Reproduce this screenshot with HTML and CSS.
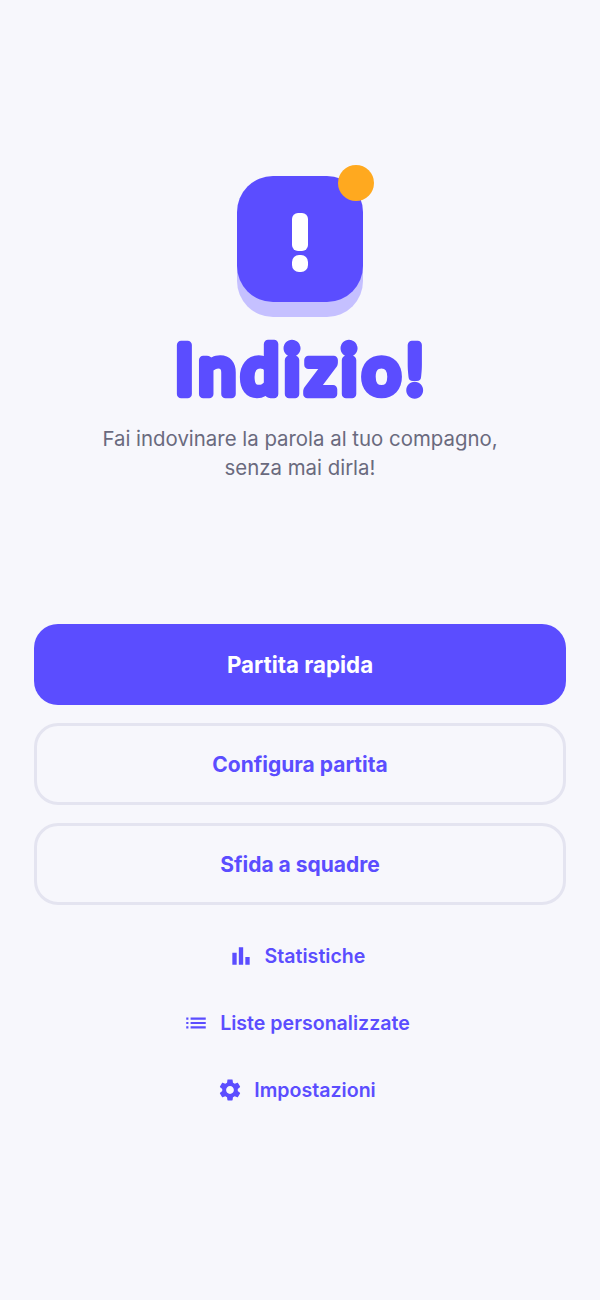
FILE: index.html
```html
<!DOCTYPE html>
<html lang="it">
<head>
<meta charset="utf-8">
<title>Indizio!</title>
<link rel="stylesheet" href="styles.css">
</head>
<body>
<main class="page">
  <section class="hero">
    <div class="logo">
      <span class="logo-bar"></span>
      <span class="logo-point"></span>
      <span class="logo-dot"></span>
    </div>
    <h1 class="title"><svg class="title-svg" viewBox="0 0 340 80"><text class="title-text" x="172" y="64" text-anchor="middle">Indizio!</text></svg></h1>
    <p class="subtitle">Fai indovinare la parola al tuo compagno,<br>senza mai dirla!</p>
  </section>
  <section class="actions">
    <button class="btn btn-primary">Partita rapida</button>
    <button class="btn btn-outline">Configura partita</button>
    <button class="btn btn-outline">Sfida a squadre</button>
  </section>
  <nav class="links">
    <a class="link"><svg class="icon" viewBox="0 0 24 24"><path d="M4 9h4v11H4zm12 4h4v7h-4zm-6-9h4v16h-4z"/></svg>Statistiche</a>
    <a class="link"><svg class="icon" viewBox="0 0 24 24"><path d="M3 13h2v-2H3v2zm0 4h2v-2H3v2zm0-8h2V7H3v2zm4 4h14v-2H7v2zm0 4h14v-2H7v2zM7 7v2h14V7H7z"/></svg>Liste personalizzate</a>
    <a class="link"><svg class="icon" viewBox="0 0 24 24"><path d="M19.14 12.94c.04-.3.06-.61.06-.94 0-.32-.02-.64-.07-.94l2.03-1.58c.18-.14.23-.41.12-.61l-1.92-3.32c-.12-.22-.37-.29-.59-.22l-2.39.96c-.5-.38-1.03-.7-1.62-.94l-.36-2.54c-.04-.24-.24-.41-.48-.41h-3.84c-.24 0-.43.17-.47.41l-.36 2.54c-.59.24-1.13.57-1.62.94l-2.39-.96c-.22-.08-.47 0-.59.22L2.74 8.87c-.12.21-.08.47.12.61l2.03 1.58c-.05.3-.09.63-.09.94s.02.64.07.94l-2.03 1.58c-.18.14-.23.41-.12.61l1.92 3.32c.12.22.37.29.59.22l2.39-.96c.5.38 1.03.7 1.62.94l.36 2.54c.05.24.24.41.48.41h3.84c.24 0 .44-.17.47-.41l.36-2.54c.59-.24 1.13-.56 1.62-.94l2.39.96c.22.08.47 0 .59-.22l1.92-3.32c.12-.22.07-.47-.12-.61l-2.01-1.58zM12 15.6c-1.98 0-3.6-1.62-3.6-3.6s1.62-3.6 3.6-3.6 3.6 1.62 3.6 3.6-1.62 3.6-3.6 3.6z"/></svg>Impostazioni</a>
  </nav>
</main>
</body>
</html>
```
FILE: styles.css
```css
* { box-sizing: border-box; }
html, body { margin: 0; height: 100%; }
body {
  background: #f7f7fc;
  font-family: "Inter", "Noto Sans", sans-serif;
  color: #5b4dff;
}
.page {
  display: flex;
  flex-direction: column;
  align-items: stretch;
  min-height: 1300px;
  padding: 176px 34px 0;
}
.hero {
  display: flex;
  flex-direction: column;
  align-items: center;
}
.logo {
  position: relative;
  display: flex;
  flex-direction: column;
  align-items: center;
  justify-content: center;
  gap: 4px;
  width: 126px;
  height: 126px;
  padding-top: 7px;
  border-radius: 36px;
  background: #5b4dff;
  box-shadow: 0 15px 0 #c5c0ff;
}
.logo-bar {
  width: 16px;
  height: 38px;
  border-radius: 6px;
  background: #fff;
}
.logo-point {
  width: 16px;
  height: 17px;
  border-radius: 7px;
  background: #fff;
}
.logo-dot {
  position: absolute;
  top: -11px;
  right: -11px;
  width: 36px;
  height: 36px;
  border-radius: 50%;
  background: #ffa91f;
}
.title {
  margin: 28px 0 0;
}
.title-svg {
  display: block;
  width: 340px;
  height: 80px;
  overflow: visible;
}
.title-text {
  font-family: "Lato", sans-serif;
  font-size: 67px;
  font-weight: 400;
  letter-spacing: 5.3px;
  fill: #5b4dff;
  stroke: #5b4dff;
  stroke-width: 8.5px;
  stroke-linejoin: round;
}
.subtitle {
  margin: 14px 0 0;
  text-align: center;
  font-size: 20.4px;
  line-height: 29px;
  color: #6a6a7e;
}
.actions {
  display: flex;
  flex-direction: column;
  gap: 18px;
  margin-top: 142px;
}
.btn {
  display: block;
  width: 100%;
  height: 82px;
  border-radius: 24px;
  font-family: inherit;
  font-size: 21px;
  font-weight: 700;
  cursor: pointer;
}
.btn-primary {
  height: 81px;
  border: 0;
  background: #5b4dff;
  color: #fff;
  font-size: 22.3px;
}
.btn-outline {
  border: 3px solid #e4e4f0;
  background: transparent;
  color: #5b4dff;
}
.links {
  display: flex;
  flex-direction: column;
  align-items: center;
  gap: 27px;
  margin-top: 31px;
}
.link {
  display: flex;
  align-items: center;
  gap: 11px;
  height: 40px;
  padding-right: 7px;
  font-size: 19.6px;
  font-weight: 600;
  color: #5b4dff;
}
.icon {
  width: 26px;
  height: 26px;
  fill: currentColor;
  flex: none;
}
```
